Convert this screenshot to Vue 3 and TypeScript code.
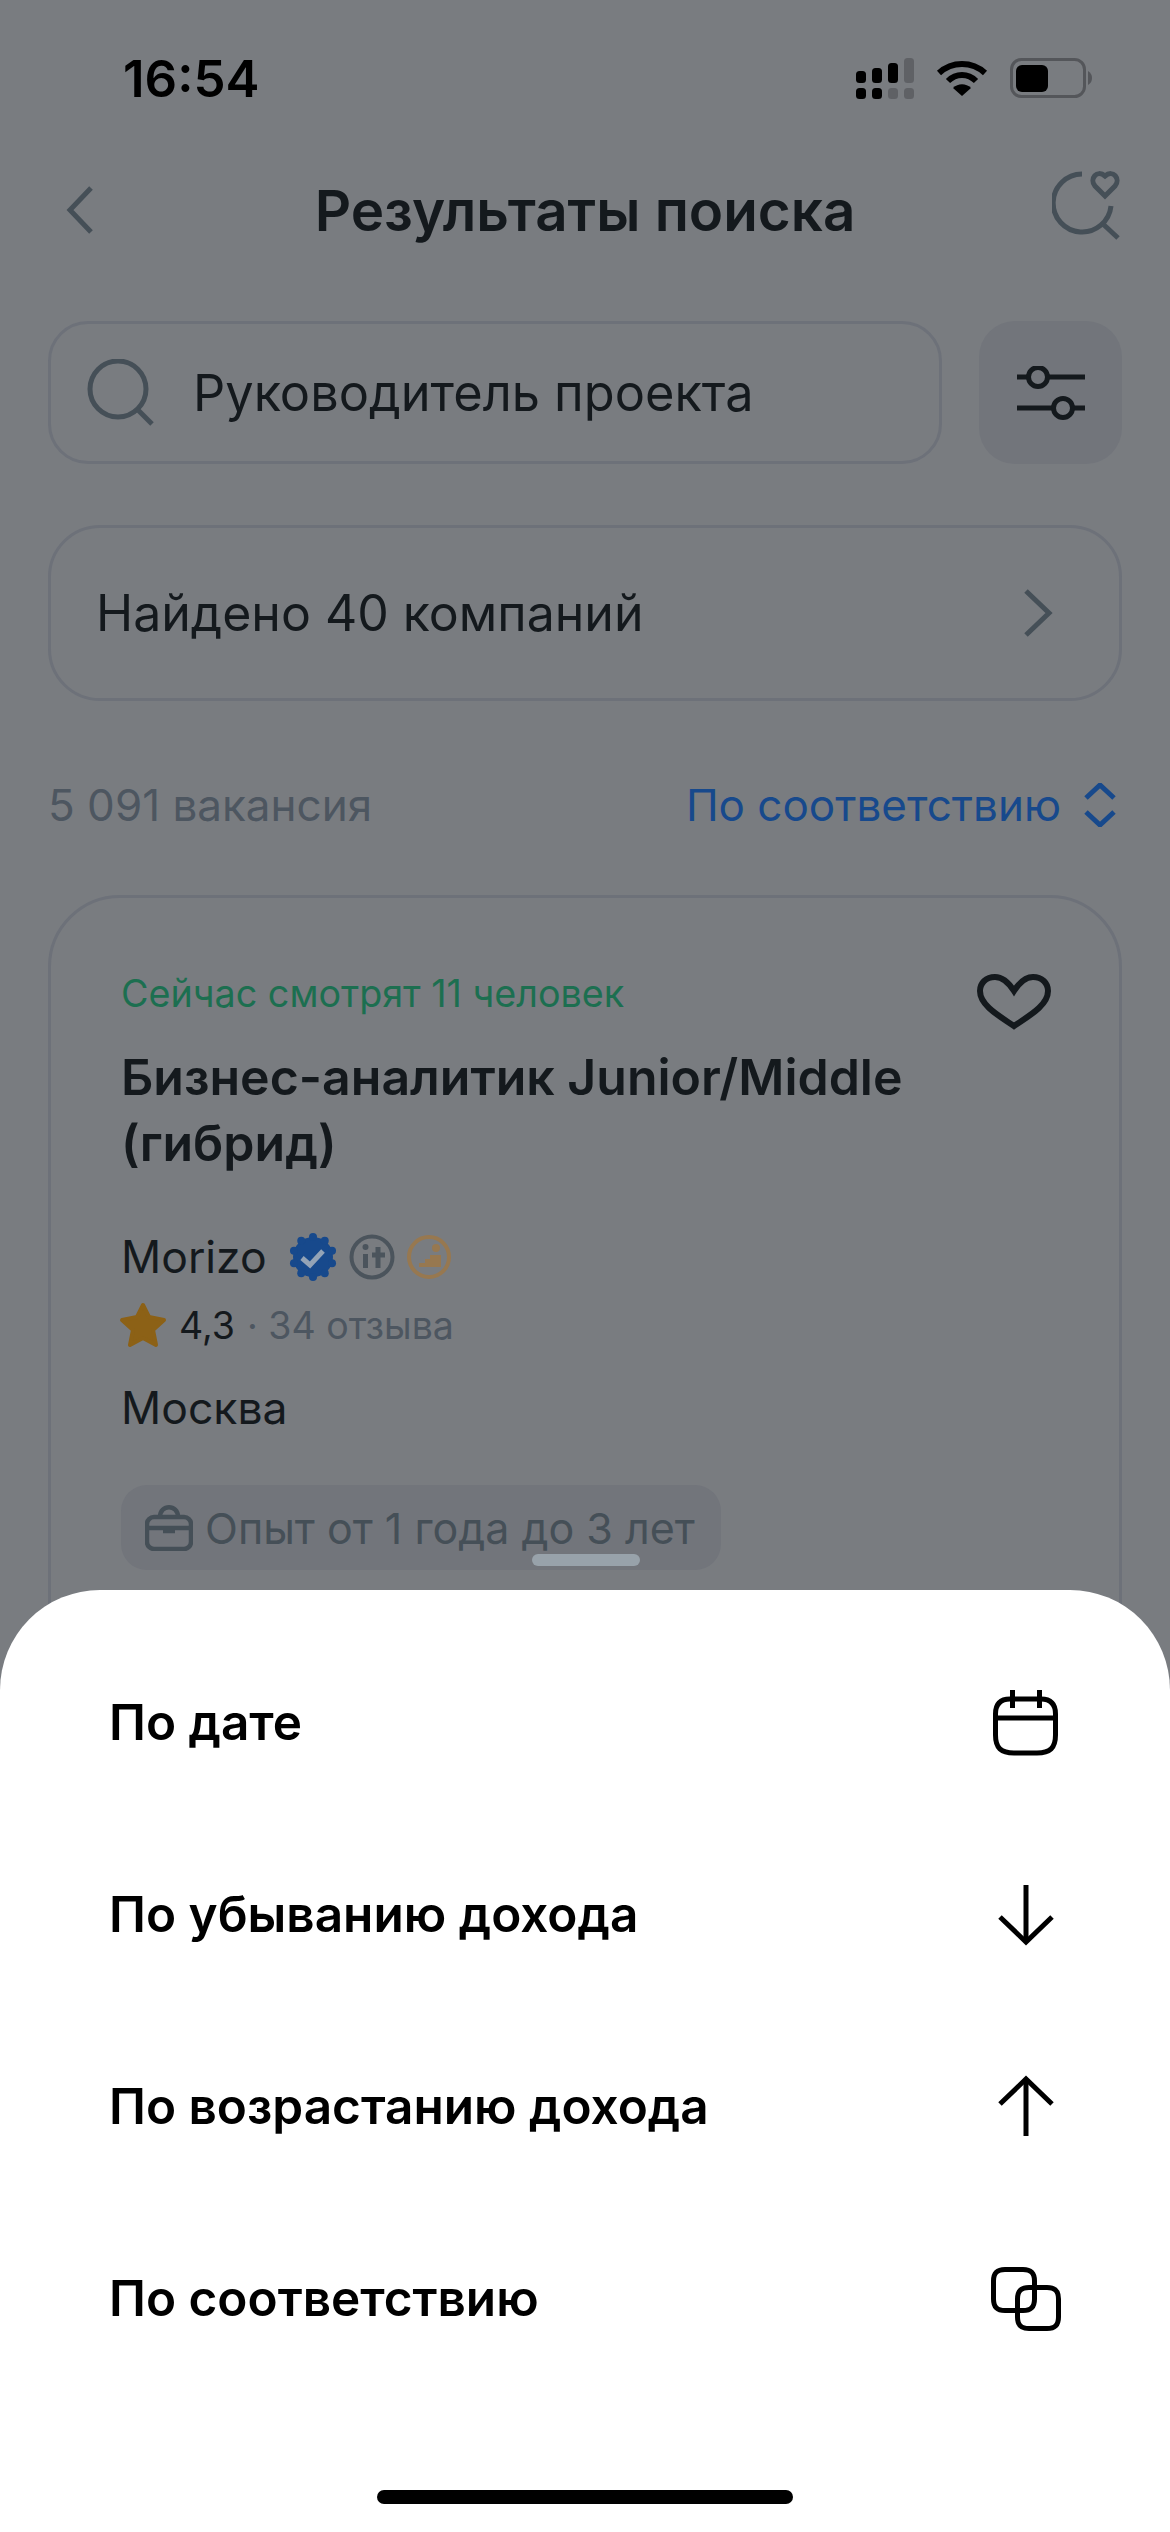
<template>
  <div class="page">
    <div class="status">
      <span class="time">16:54</span>
      <div class="status-icons">
        <svg width="58" height="41" viewBox="0 0 58 41">
          <rect x="0" y="13" width="10" height="12" rx="3.5" />
          <rect x="16" y="10" width="10" height="15" rx="3.5" />
          <rect x="32" y="5" width="10" height="20" rx="3.5" />
          <rect x="48" y="0" width="10" height="25" rx="3.5" fill="#5f6165" />
          <rect x="0" y="30" width="10" height="11" rx="3.5" />
          <rect x="16" y="30" width="10" height="11" rx="3.5" />
          <rect x="32" y="30" width="10" height="11" rx="3.5" fill="#5f6165" />
          <rect x="48" y="30" width="10" height="11" rx="3.5" fill="#5f6165" />
        </svg>
        <svg width="52" height="38" viewBox="0 0 52 38">
          <path d="M3 14C16 2 36 2 49 14" fill="none" stroke="#000" stroke-width="6" />
          <path d="M12 22C20 14 32 14 40 22" fill="none" stroke="#000" stroke-width="6" />
          <path d="M26 37L17 29C22 24 30 24 35 29Z" />
        </svg>
        <svg width="83" height="40" viewBox="0 0 83 40">
          <rect x="1.5" y="1.5" width="73" height="37" rx="10" fill="none" stroke="#54565a" stroke-width="3" />
          <rect x="6" y="7" width="32" height="27" rx="6" />
          <path d="M78 13C81 15 82 17 82 20C82 23 81 25 78 27Z" fill="#54565a" />
        </svg>
      </div>
    </div>

    <div class="header">
      <svg class="back" width="28" height="50" viewBox="0 0 28 50">
        <path d="M25 3L4 25L25 47" />
      </svg>
      <div class="title">Результаты поиска</div>
      <svg class="fav-search" width="72" height="72" viewBox="0 0 72 72">
        <path d="M30 6A29 29 0 1 0 59 38" />
        <path d="M51 56L66 70" />
        <path d="M53 28L43 18C37 11 45 1 53 8C61 1 69 11 63 18Z" />
      </svg>
    </div>

    <div class="search-row">
      <div class="search">
        <svg class="search-icon" width="68" height="68" viewBox="0 0 68 68">
          <circle cx="31" cy="30" r="28" />
          <path d="M50 50L65 65" />
        </svg>
        <span>Руководитель проекта</span>
      </div>
      <div class="filter">
        <svg width="68" height="54" viewBox="0 0 68 54">
          <path d="M0 11H11M32 11H68M0 42H35M57 42H68" />
          <circle cx="21" cy="11" r="9.500" />
          <circle cx="46" cy="42" r="9.500" />
        </svg>
      </div>
    </div>

    <div class="companies">
      <span>Найдено 40 компаний</span>
      <svg class="next" width="30" height="50" viewBox="0 0 30 50">
        <path d="M3 3L26 25L3 47" />
      </svg>
    </div>

    <div class="count-row">
      <span class="count">5 091 вакансия</span>
      <div class="sort">
        <span>По соответствию</span>
        <svg width="34" height="44" viewBox="0 0 34 44">
          <path d="M3 15L17 2L31 15M3 29L17 42L31 29" />
        </svg>
      </div>
    </div>

    <div class="card">
      <div class="watching">Сейчас смотрят 11 человек</div>
      <svg class="heart" width="74" height="56" viewBox="0 0 74 56">
        <path d="M37 17C30 6 23 3 18 3C9 3 3 9 3 17C3 32 24 43 37 52C50 43 71 32 71 17C71 9 65 3 56 3C51 3 44 6 37 17Z" />
      </svg>
      <div class="job-title">Бизнес-аналитик Junior/Middle<br />(гибрид)</div>
      <div class="company">
        <span>Morizo</span>
        <svg class="badge" width="48" height="48" viewBox="0 0 48 48">
          <g fill="#17498c">
            <circle cx="24" cy="24" r="20" />
            <circle v-for="(p, i) in lobes" :key="i" :cx="p.x" :cy="p.y" r="4" />
          </g>
          <path fill="none" stroke="#93a3b6" stroke-width="5" d="M13 25L21 32L34 18" />
        </svg>
        <svg class="badge" width="46" height="46" viewBox="0 0 46 46">
          <circle cx="23" cy="23" r="20.500" fill="none" stroke="#4b545c" stroke-width="4" />
          <path fill="none" stroke="#4b545c" stroke-width="5" d="M16.500 20V34M29 13V34M23 21H36" />
          <circle cx="16.500" cy="13" r="3" fill="#4b545c" />
        </svg>
        <svg class="badge" width="44" height="46" viewBox="0 0 44 46">
          <circle cx="22" cy="23" r="20" fill="none" stroke="#977850" stroke-width="4" />
          <circle cx="29" cy="14" r="4" fill="#977850" />
          <path fill="#977850" d="M12 33V29H18V25H23V21H34V33Z" />
        </svg>
      </div>
      <div class="rating">
        <svg width="48" height="46" viewBox="0 0 48 46">
          <path fill="#8c6116" stroke="#8c6116" stroke-width="4" stroke-linejoin="round" d="M24 3L30 15L45 18L34 28L37 43L24 36L11 43L14 28L3 18L18 15Z" />
        </svg>
        <span class="score">4,3</span>
        <span class="reviews">· 34 отзыва</span>
      </div>
      <div class="city">Москва</div>
      <div class="chip">
        <svg width="48" height="46" viewBox="0 0 48 46">
          <rect x="2" y="12" width="44" height="32" rx="7" />
          <path d="M15 12C15 -1 33 -1 33 12M2 23H46M18 26H30" />
        </svg>
        <span>Опыт от 1 года до 3 лет</span>
      </div>
    </div>

    <div class="sheet">
      <div class="handle"></div>
      <div v-for="row in rows" :key="row.label" class="sheet-row">
        <span>{{ row.label }}</span>
        <svg width="72" height="72" viewBox="0 0 72 72">
          <path v-for="(d, i) in row.paths" :key="i" :d="d" />
        </svg>
      </div>
      <div class="home"></div>
    </div>
  </div>
</template>

<script setup lang="ts">
interface SortRow {
  label: string
  paths: string[]
}

// scallops of the verified badge
const lobes = Array.from({ length: 10 }, (_, i) => {
  const a = (i * Math.PI) / 5 - Math.PI / 2
  return { x: 24 + 20 * Math.cos(a), y: 24 + 20 * Math.sin(a) }
})

const rows: SortRow[] = [
  {
    label: 'По дате',
    paths: [
      'M20 13C10 13 5.500 18 5.500 28V49C5.500 62 11 67 24 67H47C60 67 65.500 62 65.500 49V28C65.500 18 61 13 51 13Z',
      'M5.500 32H65.500',
      'M22.500 4V22M49.500 4V22',
    ],
  },
  { label: 'По убыванию дохода', paths: ['M36 7V64', 'M10 39L36 64L62 39'] },
  { label: 'По возрастанию дохода', paths: ['M36 66V9', 'M10 34L36 9L62 34'] },
  {
    label: 'По соответствию',
    paths: [
      'M15 7.500H33C41 7.500 44.500 11 44.500 19V37C44.500 45 41 48.500 33 48.500H15C7 48.500 3.500 45 3.500 37V19C3.500 11 7 7.500 15 7.500Z',
      'M39 25.500H57C65 25.500 68.500 29 68.500 37V55C68.500 63 65 66.500 57 66.500H39C31 66.500 27.500 63 27.500 55V37C27.500 29 31 25.500 39 25.500Z',
    ],
  },
]
</script>

<style scoped>
.page {
  position: relative;
  width: 1170px;
  height: 2532px;
  overflow: hidden;
  background: #797c80;
  color: #14191d;
  font-family: Inter, "Noto Sans", sans-serif;
}
.status {
  height: 156px;
  display: flex;
  align-items: center;
  justify-content: space-between;
  padding: 0 77px 0 123px;
  box-sizing: border-box;
}
.time {
  font-size: 51px;
  font-weight: 600;
  color: #000;
}
.status-icons {
  display: flex;
  align-items: center;
  gap: 22px;
}
.header {
  position: relative;
  height: 108px;
  display: flex;
  align-items: center;
  justify-content: center;
}
.back {
  position: absolute;
  left: 66px;
  top: 29px;
}
.back path,
.next path,
.fav-search path {
  fill: none;
  stroke: #454f57;
  stroke-width: 5;
}
.fav-search {
  position: absolute;
  left: 1052px;
  top: 12px;
}
.title {
  font-size: 56.5px;
  font-weight: 600;
}
.search-row {
  display: flex;
  gap: 37px;
  margin: 57px 48px 0 48px;
}
.search {
  flex: 1;
  height: 143px;
  box-sizing: border-box;
  display: flex;
  align-items: center;
  gap: 38px;
  padding-left: 36px;
  border: 3px solid #6d7179;
  border-radius: 40px;
  font-size: 50.5px;
}
.search-icon circle,
.search-icon path {
  fill: none;
  stroke: #454f57;
  stroke-width: 5;
}
.filter {
  width: 143px;
  height: 143px;
  border-radius: 36px;
  background: #72757b;
  display: flex;
  align-items: center;
  justify-content: center;
}
.filter path,
.filter circle {
  fill: none;
  stroke: #14191d;
  stroke-width: 5;
}
.companies {
  height: 176px;
  box-sizing: border-box;
  margin: 61px 48px 0 48px;
  padding: 0 66px 0 45px;
  display: flex;
  align-items: center;
  justify-content: space-between;
  border: 3px solid #6d7179;
  border-radius: 52px;
  font-size: 50px;
}
.count-row {
  height: 60px;
  margin: 74px 53px 0 48px;
  display: flex;
  align-items: center;
  justify-content: space-between;
  font-size: 44px;
}
.count {
  color: #4d5660;
}
.sort {
  display: flex;
  align-items: center;
  gap: 22px;
  color: #17498c;
}
.sort path {
  fill: none;
  stroke: #17498c;
  stroke-width: 5;
}
.card {
  position: relative;
  margin: 60px 48px 0 48px;
  height: 900px;
  box-sizing: border-box;
  padding: 70px 0 0 70px;
  border: 3px solid #6d7179;
  border-radius: 72px;
}
.watching {
  font-size: 37.7px;
  line-height: 50px;
  color: #1c6f50;
}
.heart {
  position: absolute;
  top: 76px;
  right: 68px;
}
.heart path {
  fill: none;
  stroke: #14191d;
  stroke-width: 6;
}
.job-title {
  margin-top: 26px;
  font-size: 50px;
  line-height: 66px;
  font-weight: 600;
}
.company {
  margin-top: 53px;
  height: 56px;
  display: flex;
  align-items: center;
  font-size: 44.5px;
}
.company span {
  margin-right: 22px;
}
.badge {
  margin-right: 12px;
}
.rating {
  margin-top: 16px;
  margin-left: -2px;
  height: 48px;
  display: flex;
  align-items: center;
  font-size: 37.5px;
}
.score {
  margin-left: 12px;
}
.reviews {
  margin-left: 12px;
  color: #4d5660;
}
.city {
  margin-top: 31px;
  font-size: 44.5px;
  line-height: 56px;
}
.chip {
  margin-top: 49px;
  width: 600px;
  height: 85px;
  box-sizing: border-box;
  padding-left: 24px;
  display: flex;
  align-items: center;
  gap: 12px;
  border-radius: 26px;
  background: #72757b;
  font-size: 43px;
  color: #454f57;
}
.chip rect,
.chip path {
  fill: none;
  stroke: #454f57;
  stroke-width: 4.500;
}
.sheet {
  position: absolute;
  left: 0;
  right: 0;
  top: 1590px;
  bottom: 0;
  padding-top: 36px;
  background: #fff;
  border-radius: 100px 100px 0 0;
  color: #000;
}
.handle {
  position: absolute;
  left: 532px;
  top: -36px;
  width: 108px;
  height: 12px;
  border-radius: 6px;
  background: #98a2aa;
}
.sheet-row {
  height: 192px;
  padding: 0 108px 0 109px;
  display: flex;
  align-items: center;
  justify-content: space-between;
  font-size: 49.5px;
  font-weight: 600;
}
.sheet-row path {
  fill: none;
  stroke: #000;
  stroke-width: 5;
}
.home {
  width: 416px;
  height: 14px;
  margin: 96px auto 0;
  border-radius: 7px;
  background: #000;
}
</style>
